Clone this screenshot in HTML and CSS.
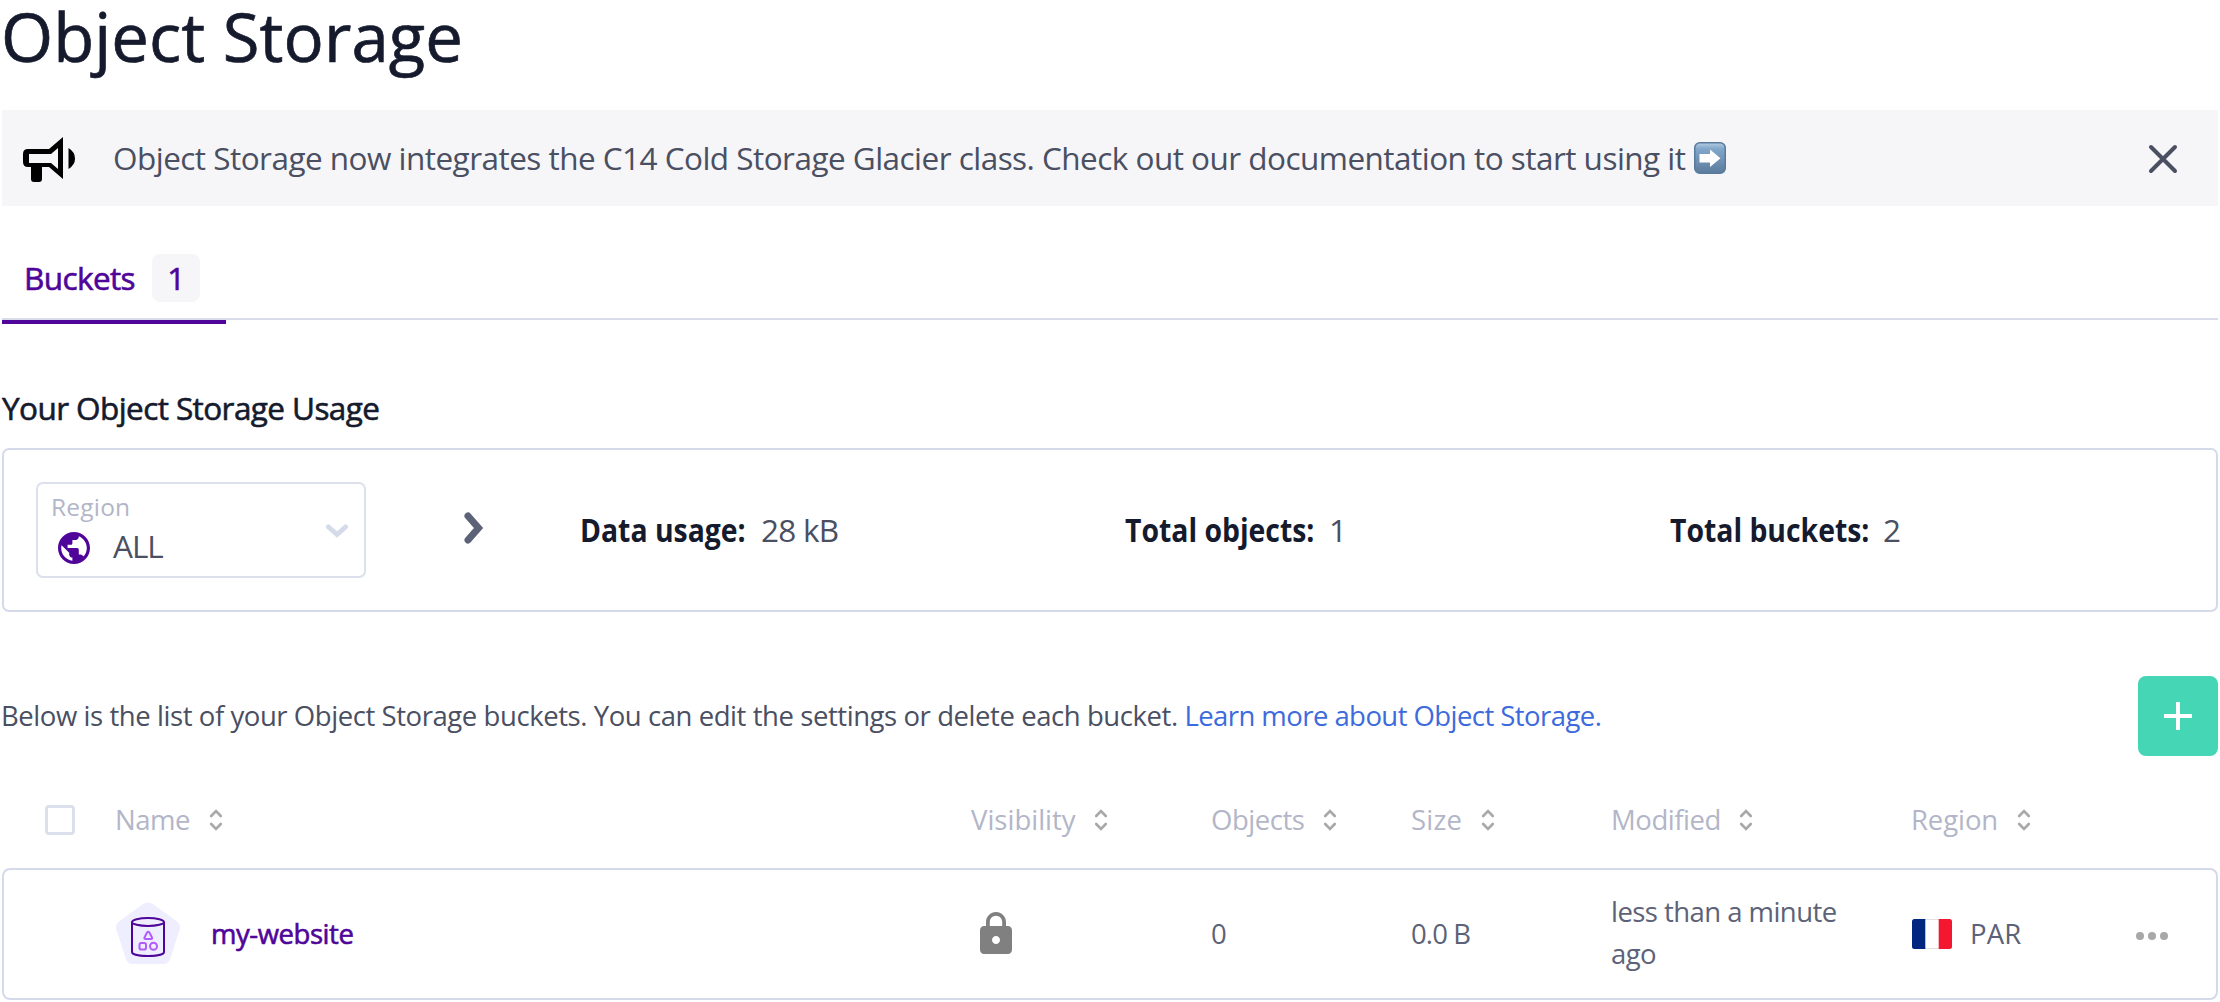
FILE: index.html
```html
<!DOCTYPE html>
<html lang="en">
<head>
<meta charset="utf-8">
<title>Object Storage</title>
<link rel="stylesheet" href="styles.css">
</head>
<body>
<svg class="defs" aria-hidden="true">
  <symbol id="sort" viewBox="0 0 14 22"><path d="M2.2 7 7 2.200 11.800 7M2.200 15 7 19.800 11.800 15" fill="none" stroke="#a8a8a8" stroke-width="2.600" stroke-linecap="round"/></symbol>
</svg>
<main class="page">
  <h1 class="title">Object Storage</h1>

  <section class="banner">
    <svg class="banner-icon" viewBox="0 0 56 48" width="56" height="48">
      <path fill-rule="evenodd" d="M7 13H28L42 1V43L28 31H21V43q0 3-3 3H13q-3 0-3-3V31H7q-5 0-5-5V18q0-5 5-5ZM8 18V27H30L37 33V12L30 18Z"/>
      <path d="M47.500 12q6.500 4 6.500 10.500T47.500 33Z"/>
    </svg>
    <p class="banner-text">Object Storage now integrates the C14 Cold Storage Glacier class. Check out our documentation to start using it</p>
    <svg class="arrow" viewBox="0 0 32 32" width="32" height="32">
      <defs><linearGradient id="sky" x2="0" y2="1"><stop offset="0" stop-color="#b5cde0"/><stop offset=".2" stop-color="#82a7cb"/><stop offset="1" stop-color="#5b7b9b"/></linearGradient></defs>
      <rect x=".75" y=".75" width="30.500" height="30.500" rx="5" fill="url(#sky)" stroke="#597b9b" stroke-width="1.500"/>
      <path d="M5.500 12H16V7.500L26.500 16.300 16 25V20.500H5.500Z" fill="#fff"/>
    </svg>
    <button class="close" aria-label="Close"><svg viewBox="0 0 30 30" width="30" height="30"><path d="M3 3 27 27M27 3 3 27" stroke="#4a4f62" stroke-width="4" stroke-linecap="round"/></svg></button>
  </section>

  <nav class="tabs">
    <a class="tab">Buckets<span class="count">1</span></a>
  </nav>

  <h2 class="subtitle">Your Object Storage Usage</h2>
  <section class="usage">
    <div class="select">
      <div class="select-main">
        <span class="select-label">Region</span>
        <span class="select-value">
          <svg viewBox="2 2 20 20" width="32" height="32"><path fill="#4f0599" d="M12 2C6.480 2 2 6.480 2 12s4.480 10 10 10 10-4.480 10-10S17.520 2 12 2zm-1 17.930c-3.950-.49-7-3.850-7-7.930 0-.62.080-1.210.21-1.790L9 15v1c0 1.100.9 2 2 2v1.930zm6.900-2.540c-.26-.81-1-1.390-1.900-1.390h-1v-3c0-.55-.45-1-1-1H8v-2h2c.55 0 1-.45 1-1V7h2c1.100 0 2-.9 2-2v-.41c2.930 1.190 5 4.060 5 7.410 0 2.080-.8 3.970-2.100 5.390z"/></svg>
          <span>ALL</span>
        </span>
      </div>
      <svg class="select-caret" viewBox="0 0 24 16" width="24" height="16"><path d="M3.500 4 12 11.500 20.500 4" fill="none" stroke="#d5dbe9" stroke-width="5" stroke-linecap="round"/></svg>
    </div>
    <svg class="next" viewBox="0 0 20 34" width="20" height="34"><path d="M4 5 14.500 17 4 29" fill="none" stroke="#5c6277" stroke-width="7" stroke-linecap="round"/></svg>
    <dl class="stats">
      <div class="stat"><dt class="stat-data">Data usage:</dt><dd>28 kB</dd></div>
      <div class="stat"><dt class="stat-objects">Total objects:</dt><dd>1</dd></div>
      <div class="stat"><dt class="stat-buckets">Total buckets:</dt><dd>2</dd></div>
    </dl>
  </section>

  <div class="intro">
    <p class="intro-text">Below is the list of your Object Storage buckets. You can edit the settings or delete each bucket. <a class="link">Learn more about Object Storage.</a></p>
    <button class="add" aria-label="Create bucket"><svg viewBox="0 0 28 28" width="28" height="28"><path d="M14 0V28M0 14H28" stroke="#fff" stroke-width="4"/></svg></button>
  </div>

  <div class="grid head">
    <span class="check"></span>
    <span class="col">Name<svg class="sort"><use href="#sort"/></svg></span>
    <span class="col vis">Visibility<svg class="sort"><use href="#sort"/></svg></span>
    <span class="col">Objects<svg class="sort"><use href="#sort"/></svg></span>
    <span class="col size">Size<svg class="sort"><use href="#sort"/></svg></span>
    <span class="col">Modified<svg class="sort"><use href="#sort"/></svg></span>
    <span class="col region">Region<svg class="sort"><use href="#sort"/></svg></span>
  </div>

  <div class="grid row">
    <span></span>
    <span class="name">
      <svg viewBox="0 0 64 62" width="64" height="62">
        <path d="M26.500 2.500Q32 -1.500 37.500 2.500L60.500 19Q65 22.500 63.500 28L54.500 56Q52.500 62 47 62H17Q11.500 62 9.500 56L.5 28Q-1 22.500 3.500 19Z" fill="#eeeeff"/>
        <g fill="none" stroke="#4f0599" stroke-width="2"><ellipse cx="32" cy="20" rx="16" ry="4"/><path d="M16 20V50C16 55.300 48 55.300 48 50V20"/></g>
        <g fill="none" stroke="#b05cff" stroke-width="2" stroke-linejoin="round"><path d="M31 30.500q1.200-1.500 2.400 0L36 35.500q.5 1.500-1 1.500H29.500q-1.500 0-1-1.500Z"/><rect x="23.500" y="41" width="6.500" height="6.500" rx="1.800"/><circle cx="37.500" cy="44.300" r="3.500"/></g>
      </svg>
      <a>my-website</a>
    </span>
    <span class="lock"><svg viewBox="4 1 16 21" width="32" height="42"><path fill="#808080" d="M18 8h-1V6c0-2.760-2.240-5-5-5S7 3.240 7 6v2H6c-1.100 0-2 .9-2 2v10c0 1.100.9 2 2 2h12c1.100 0 2-.9 2-2V10c0-1.100-.9-2-2-2zm-6 9c-1.100 0-2-.9-2-2s.9-2 2-2 2 .9 2 2-.9 2-2 2zm3.100-9H8.900V6c0-1.710 1.390-3.100 3.100-3.100 1.710 0 3.100 1.390 3.100 3.100v2z"/></svg></span>
    <span class="cell">0</span>
    <span class="cell bytes">0.0 B</span>
    <span class="modified">less than a minute ago</span>
    <span class="place"><svg viewBox="0 0 40 30" width="40" height="30"><rect x=".5" y=".5" width="39" height="29" rx="2" fill="#fff" stroke="#e2e2e6"/><path d="M13.300 0H2.500Q0 0 0 2.500V27.500Q0 30 2.500 30H13.300Z" fill="#00267f"/><path d="M26.700 0H37.500Q40 0 40 2.500V27.500Q40 30 37.500 30H26.700Z" fill="#f31830"/></svg><span class="cell">PAR</span></span>
    <svg class="more" viewBox="0 0 32 8" width="32" height="8" fill="#a8a8a8"><circle cx="4" cy="4" r="4"/><circle cx="16" cy="4" r="4"/><circle cx="28" cy="4" r="4"/></svg>
  </div>
</main>
</body>
</html>
```
FILE: styles.css
```css
* { box-sizing: border-box; margin: 0; padding: 0; }
body { background: #fff; color: #4a4f62; font-family: "Open Sans", "Noto Sans", sans-serif; font-size: 31.5px; }
svg { display: block; flex: none; }
button { border: 0; background: none; }
.defs { width: 0; height: 0; position: absolute; }
.page { width: 2220px; height: 1002px; padding: 0 2px; }

.title { margin-left: -1px; height: 72px; font-size: 67px; line-height: 72px; font-weight: 400; letter-spacing: .1px; color: #151a2d; -webkit-text-stroke: .7px; }

.banner { display: flex; align-items: center; height: 96px; margin-top: 38px; padding: 0 40px 0 19px; background: #f6f6f8; }
.banner-icon { margin-top: 3px; }
.banner-text { margin: -2px 0 0 36px; letter-spacing: -.53px; white-space: nowrap; }
.arrow { margin-left: 9px; }
.close { margin-left: auto; margin-top: 2px; }

.tabs { display: flex; height: 114px; border-bottom: 2px solid #d7dbea; }
.tab { display: flex; align-items: center; height: 118px; width: 224px; padding: 29px 0 0 22px; border-bottom: 4px solid #4f0599; color: #4f0599; letter-spacing: -.6px; line-height: 48px; -webkit-text-stroke: .6px; }
.count { width: 48px; height: 48px; margin-left: 17px; border-radius: 8px; background: #f6f6f8; text-align: center; }

.subtitle { margin: 68px 0 20px 0; height: 40px; line-height: 40px; font-size: 31.5px; font-weight: 400; letter-spacing: -.58px; color: #151a2d; -webkit-text-stroke: .6px; }
.usage { display: flex; align-items: center; height: 164px; padding-left: 32px; border: 2px solid #d5daea; border-radius: 7px; }
.select { display: flex; width: 330px; height: 96px; padding: 0 15px 0 13px; border: 2px solid #dbe0ec; border-radius: 7px; }
.select-main { display: flex; flex-direction: column; flex: 1; padding-top: 7px; }
.select-label { height: 32px; font-size: 24.5px; line-height: 31px; letter-spacing: .2px; color: #b2b6c8; }
.select-value { display: flex; align-items: center; gap: 23px; height: 46px; padding: 3px 0 0 7px; line-height: 40px; letter-spacing: -1px; }
.select-value span { margin-top: -3px; }
.select-caret { margin-top: 39px; }
.next { margin: -4px 0 0 98px; }
.stats { display: grid; grid-template-columns: 545px 545px 300px; margin: -1px 0 0 96px; }
.stat { display: flex; gap: 14px; white-space: nowrap; letter-spacing: -.75px; }
.stat dt { font-weight: 700; letter-spacing: 0; color: #151a2d; transform: scaleX(.9); transform-origin: left; }
.stat-data { width: 167px; }
.stat-objects { width: 190px; }
.stat-buckets { width: 199px; }

.intro { display: flex; align-items: center; justify-content: space-between; height: 80px; margin-top: 64px; margin-left: -1px; font-size: 27.5px; }
.intro-text { margin-top: -1px; letter-spacing: -.43px; white-space: nowrap; }
.link { color: #3d6bdc; letter-spacing: -.56px; }
.add { display: grid; place-items: center; width: 80px; height: 80px; border-radius: 8px; background: #45d6b5; }

.grid { display: grid; grid-template-columns: 113px 856px 240px 200px 200px 300px 226px 1fr; align-items: center; font-size: 27.5px; letter-spacing: -.45px; }
.head { height: 112px; padding-top: 16px; color: #b2b6c8; line-height: 36px; }
.check { width: 30px; height: 30px; margin-left: 43px; border: 3px solid #dbe0ec; border-radius: 4px; }
.col { display: flex; align-items: center; padding-bottom: 1px; }
.vis { letter-spacing: 0; }
.size { letter-spacing: .2px; }
.region { letter-spacing: -.1px; }
.sort { width: 14px; height: 22px; margin: 1px 0 0 18.500px; }
.row { grid-template-columns: 112px 855px 240px 200px 200px 300px 225px 1fr; height: 132px; border: 2px solid #d5daea; border-radius: 8px; color: #5c6277; }
.name { display: flex; align-items: center; gap: 31px; color: #4f0599; -webkit-text-stroke: .6px; }
.name svg { margin-top: -2px; -webkit-text-stroke: 0; }
.name a { margin-top: -1px; letter-spacing: -.45px; }
.lock { padding: 0 0 2px 9px; }
.cell { margin-top: -1px; }
.bytes { letter-spacing: -.9px; }
.modified { width: 250px; padding-bottom: 3px; line-height: 42px; letter-spacing: -.55px; }
.place { display: flex; align-items: center; gap: 18px; margin-left: 1px; letter-spacing: .1px; }
.more { margin-top: 3px; }
```
